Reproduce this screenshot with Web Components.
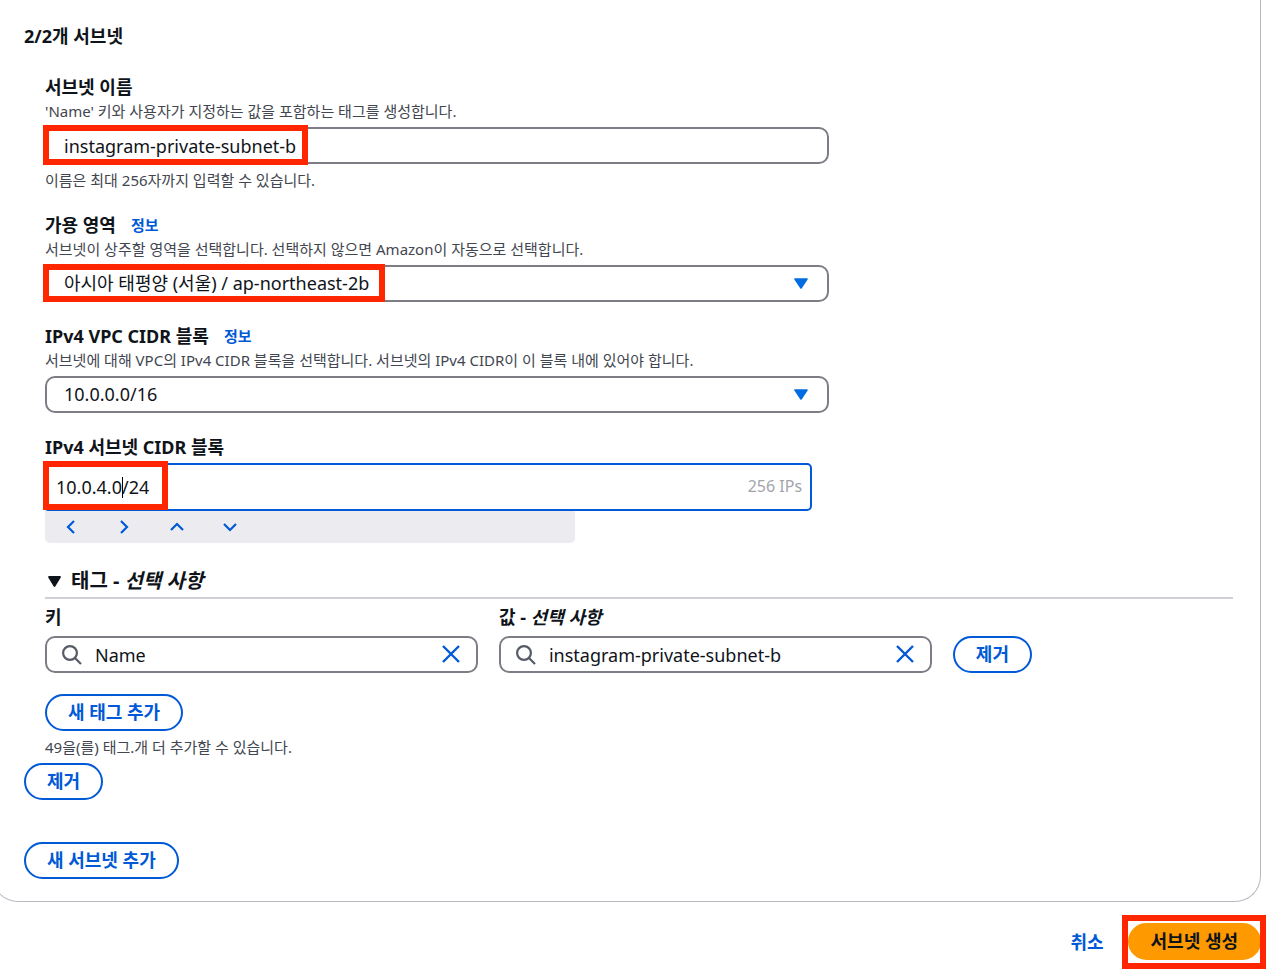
<!DOCTYPE html>
<html lang="ko">
<head>
<meta charset="utf-8">
<meta name="viewport" content="width=device-width, initial-scale=1">
<title>서브넷 생성</title>
<style>
  html { background: #fff; }
  body {
    margin: 0;
    overflow-x: hidden;
    color: #0f141a;
    font-family: "Noto Sans", "Noto Sans CJK KR", sans-serif;
    font-size: 18px;
    --blue: #0059d6;
    --grey-line: #7d7d86;
    --muted: #424650;
    --red: #ff2600;
  }
</style>
</head>
<body>
<subnet-page></subnet-page>

<script>
const base = `*, *::before, *::after { box-sizing: border-box; }
  input, select, button { font: inherit; color: inherit; margin: 0; outline: none; }
  a { color: var(--blue); text-decoration: none; }
  svg { display: block; flex: none; }`;

function define(name, render) {
  customElements.define(name, class extends HTMLElement {
    constructor() {
      super();
      this.attachShadow({ mode: 'open' });
    }
    connectedCallback() {
      if (this.shadowRoot.childNodes.length) return;
      const t = document.createElement('template');
      t.innerHTML = `<style>${base}</style>` + render(this);
      this.shadowRoot.append(t.content.cloneNode(true));
    }
  });
}

/* Red frame laid over a control; its box is set with --x, --y, --w and --h. */
define('mark-frame', () => `<style>
  :host { display: block; position: absolute; z-index: 2; pointer-events: none; box-sizing: border-box;
    left: var(--x); top: var(--y); width: var(--w); height: var(--h); border: 6px solid var(--red); }
</style>`);

define('pill-button', el => `<style>
  :host { display: inline-block; }
  button { display: block; height: 37px; padding: 0 21px; border: 2px solid var(--blue); border-radius: 19px;
    background: #fff; color: var(--blue); font-weight: 700; line-height: 33px; white-space: nowrap; cursor: pointer; }
  :host([primary]) button { background: #ff9900; border-color: #ff9900; color: #0f141a; }
</style><button type="button"><slot></slot></button>`);

/* Label row, description, control and constraint text. */
const fieldHead = el => `
  <div class="head"><label for="control">${el.getAttribute('label')}</label>${
    el.hasAttribute('info') ? '<a href="#info">정보</a>' : ''}</div>
  ${el.hasAttribute('description') ? `<p class="desc">${el.getAttribute('description')}</p>` : ''}`;
const fieldCss = `
  :host { display: block; width: 66%; }
  .head { display: flex; align-items: center; gap: 15px; line-height: 26px; }
  label { font-weight: 700; }
  .head a { font-size: 15px; font-weight: 700; }
  p { margin: 0; font-size: 15px; line-height: 22px; color: var(--muted); }
  .control { position: relative; margin-top: 5px; }
  .hint { margin-top: 5px; }
  input, select { display: block; width: 100%; height: 37px; padding: 0 17px; border: 2px solid var(--grey-line);
    border-radius: 10px; background: #fff; }`;

define('text-field', el => `<style>${fieldCss}</style>${fieldHead(el)}
  <div class="control"><input id="control" type="text" value="${el.getAttribute('value')}"><slot></slot></div>
  <p class="hint">${el.getAttribute('hint')}</p>`);

define('select-field', el => `<style>${fieldCss}
  select { appearance: none; padding: 0 40px 2px 17px; }
  svg { position: absolute; right: 20px; top: 12px; pointer-events: none; }
</style>${fieldHead(el)}
  <div class="control"><select id="control"><option>${el.getAttribute('value')}</option></select>
    <svg width="16" height="13" viewBox="0 0 16 13"><path d="M2 2h12L8 11z" fill="#006ce0" stroke="#006ce0" stroke-width="1.6" stroke-linejoin="round"/></svg>
    <slot></slot></div>`);

define('cidr-field', el => `<style>${fieldCss}
  .control { margin: 3px 17px 0 -2px; }
  input { height: 48px; padding: 0 100px 0 11px; border: 2px solid var(--blue); border-radius: 5px; }
  .count { position: absolute; right: 10px; top: 0; line-height: 46px; font-size: 16px; color: #a4a4ad; }
  .caret { position: absolute; left: 79px; top: 14px; width: 1px; height: 21px; background: #000; }
  .steps { display: flex; gap: 21px; width: 530px; max-width: 100%; height: 32px; padding: 0 10px; background: #ebebf0; border-radius: 0 0 5px 5px; }
  .steps button { display: grid; place-items: center; width: 32px; height: 32px; padding: 0; border: 0; background: none; color: var(--blue); cursor: pointer; }
</style>${fieldHead(el)}
  <div class="control"><input id="control" type="text" value="${el.getAttribute('value')}">
    <span class="caret"></span><span class="count">256 IPs</span><slot></slot></div>
  <div class="steps">${[['이전', 'M11 2 5 8l6 6'], ['다음', 'M5 2l6 6-6 6'], ['위', 'M2 11l6-6 6 6'], ['아래', 'M2 5l6 6 6-6']]
    .map(([n, d]) => `<button type="button" aria-label="${n}"><svg width="16" height="16" viewBox="0 0 16 16"><path d="${d}" fill="none" stroke="currentColor" stroke-width="2.2"/></svg></button>`).join('')}</div>`);

define('search-field', el => `<style>
  :host { display: block; min-width: 0; }
  label { display: block; font-weight: 700; line-height: 26px; }
  .box { display: flex; align-items: center; height: 37px; margin-top: 6px; padding: 0 14px; border: 2px solid var(--grey-line); border-radius: 10px; }
  input { flex: 1; min-width: 0; height: 33px; padding: 0 0 0 13px; border: 0; background: none; }
  button { padding: 0 1px 2px 0; border: 0; background: none; cursor: pointer; }
</style>
  <label for="control"><slot></slot></label>
  <div class="box">
    <svg width="21" height="21" viewBox="0 0 21 21"><g fill="none" stroke="#565b66" stroke-width="2.2"><circle cx="9" cy="9" r="6.9"/><path d="M14 14 20 20"/></g></svg>
    <input id="control" type="text" value="${el.getAttribute('value')}">
    <button type="button" aria-label="지우기"><svg width="20" height="20" viewBox="0 0 20 20"><path d="M2 2l16 16M18 2 2 18" fill="none" stroke="#0059d6" stroke-width="2.4"/></svg></button>
  </div>`);

define('tag-section', () => `<style>
  :host { display: block; }
  h3 { display: flex; align-items: center; gap: 8px; margin: 0; padding-bottom: 2px; border-bottom: 2px solid #d0d0d7; font-size: 20px; line-height: 28px; }
  .row { display: grid; grid-template-columns: 17fr 17fr 11fr; gap: 21px; align-items: end; margin-top: 5px; }
  .add { margin-top: 21px; }
  p { margin: 5px 0 0; font-size: 15px; line-height: 22px; color: var(--muted); }
</style>
  <h3><svg width="18" height="16" viewBox="0 0 18 16"><path d="M4 4h11L9.500 13z" fill="#0f141a" stroke="#0f141a" stroke-width="1.800" stroke-linejoin="round"/></svg><span>태그 - <em>선택 사항</em></span></h3>
  <div class="row">
    <search-field value="Name">키</search-field>
    <search-field value="instagram-private-subnet-b">값 - <em>선택 사항</em></search-field>
    <div><pill-button>제거</pill-button></div>
  </div>
  <div class="add"><pill-button>새 태그 추가</pill-button></div>
  <p>49을(를) 태그.개 더 추가할 수 있습니다.</p>`);

define('subnet-card', () => `<style>
  :host { display: block; margin: 0 19px 0 -8px; padding: 23px 27px 22px 31px; border: 1px solid #b9b9c1; border-top: 0; border-radius: 0 0 26px 26px; }
  h2 { margin: 0; font-size: 18px; line-height: 26px; }
  .fields { display: flex; flex-direction: column; gap: 21px; padding-left: 21px; margin: 25px 0 24px; }
  .more { margin-top: 42px; }
  tag-section { padding-left: 21px; margin-bottom: 5px; }
  section > pill-button { display: block; }
</style>
<section>
  <h2>2/2개 서브넷</h2>
  <div class="fields">
    <text-field label="서브넷 이름" description="'Name' 키와 사용자가 지정하는 값을 포함하는 태그를 생성합니다." value="instagram-private-subnet-b" hint="이름은 최대 256자까지 입력할 수 있습니다.">
      <mark-frame style="--x:-2px;--y:-2px;--w:265px;--h:40px"></mark-frame></text-field>
    <select-field label="가용 영역" info description="서브넷이 상주할 영역을 선택합니다. 선택하지 않으면 Amazon이 자동으로 선택합니다." value="아시아 태평양 (서울) / ap-northeast-2b">
      <mark-frame style="--x:-2px;--y:-1px;--w:342px;--h:38px"></mark-frame></select-field>
    <select-field label="IPv4 VPC CIDR 블록" info description="서브넷에 대해 VPC의 IPv4 CIDR 블록을 선택합니다. 서브넷의 IPv4 CIDR이 이 블록 내에 있어야 합니다." value="10.0.0.0/16"></select-field>
    <cidr-field label="IPv4 서브넷 CIDR 블록" value="10.0.4.0/24">
      <mark-frame style="--x:0px;--y:-2px;--w:125px;--h:49px"></mark-frame></cidr-field>
  </div>
  <tag-section></tag-section>
  <pill-button>제거</pill-button>
</section>
<pill-button class="more">새 서브넷 추가</pill-button>`);

define('form-actions', () => `<style>
  :host { display: flex; justify-content: flex-end; align-items: center; gap: 24px; padding: 21px 19px 20px; }
  a { font-weight: 700; line-height: 26px; }
  .create { position: relative; }
  pill-button { display: block; }
</style>
<a href="#cancel">취소</a>
<div class="create"><pill-button primary>서브넷 생성</pill-button><mark-frame style="--x:-6px;--y:-8px;--w:144px;--h:54px"></mark-frame></div>`);

define('subnet-page', () => `<style>:host { display: block; }</style>
  <main><subnet-card></subnet-card><form-actions></form-actions></main>`);
</script>
</body>
</html>
